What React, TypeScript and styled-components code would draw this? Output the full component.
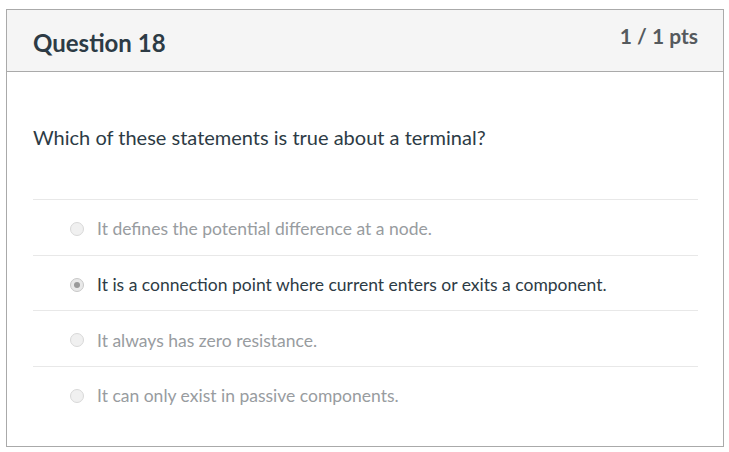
import React from "react";
import styled, { createGlobalStyle } from "styled-components";

const Global = createGlobalStyle`
  html, body { margin: 0; padding: 0; background: #ffffff; }
  body { font-family: Lato, "Open Sans", sans-serif; }
`;

const Page = styled.div`
  padding: 9px 0 0 6px;
`;

const Card = styled.div`
  width: 716px;
  height: 436px;
  border: 1px solid #aaaaaa;
  background: #fff;
  display: flex;
  flex-direction: column;
`;

const Header = styled.div`
  height: 62px;
  background: #f5f5f5;
  border-bottom: 1px solid #aaaaaa;
  display: flex;
  justify-content: space-between;
  padding: 0 25px 0 26px;
  box-sizing: border-box;
`;

const Title = styled.h2`
  margin: 0;
  padding-top: 17px;
  font-size: 24px;
  font-weight: 700;
  color: #2d3b45;
  line-height: 32px;
`;

const Points = styled.div`
  padding-top: 12px;
  font-size: 21px;
  font-weight: 700;
  color: #555a5e;
  line-height: 28px;
`;

const Body = styled.div`
  padding: 0 25px 0 26px;
`;

const QuestionText = styled.p`
  margin: 0;
  padding: 51px 0 48px;
  font-size: 20px;
  line-height: 28px;
  color: #2d3b45;
`;

const Answer = styled.div<{ $selected?: boolean }>`
  height: 55.7px;
  border-top: 1px solid #e8e8e8;
  display: flex;
  align-items: center;
  padding-left: 37px;
  gap: 13px;
  font-size: 17.5px;
  padding-top: 3px;
  box-sizing: border-box;
  color: ${(p) => (p.$selected ? "#2d3b45" : "#989c9f")};
`;

const Radio = styled.span<{ $checked?: boolean }>`
  width: 14px;
  height: 14px;
  flex: none;
  border-radius: 50%;
  background: ${(p) => (p.$checked ? "#e9e9e9" : "#f0f0f0")};
  border: 1px solid ${(p) => (p.$checked ? "#c8c8c8" : "#d8d8d8")};
  box-sizing: border-box;
  display: flex;
  align-items: center;
  justify-content: center;
  &::after {
    content: "";
    display: ${(p) => (p.$checked ? "block" : "none")};
    width: 6px;
    height: 6px;
    border-radius: 50%;
    background: #9a9a9a;
  }
`;

const answers = [
  { text: "It defines the potential difference at a node.", selected: false },
  { text: "It is a connection point where current enters or exits a component.", selected: true },
  { text: "It always has zero resistance.", selected: false },
  { text: "It can only exist in passive components.", selected: false },
];

export default function App() {
  return (
    <>
      <Global />
      <Page>
        <Card>
          <Header>
            <Title>Question 18</Title>
            <Points>1 / 1 pts</Points>
          </Header>
          <Body>
            <QuestionText>Which of these statements is true about a terminal?</QuestionText>
            {answers.map((a) => (
              <Answer key={a.text} $selected={a.selected}>
                <Radio $checked={a.selected} />
                <span>{a.text}</span>
              </Answer>
            ))}
          </Body>
        </Card>
      </Page>
    </>
  );
}
